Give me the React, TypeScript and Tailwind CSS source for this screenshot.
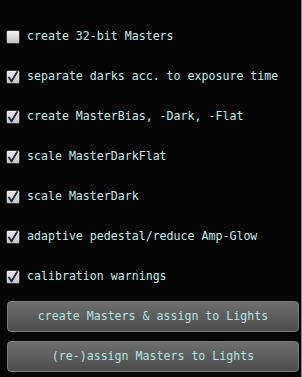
const options = [
  { label: 'create 32-bit Masters', checked: false },
  { label: 'separate darks acc. to exposure time', checked: true },
  { label: 'create MasterBias, -Dark, -Flat', checked: true },
  { label: 'scale MasterDarkFlat', checked: true },
  { label: 'scale MasterDark', checked: true },
  { label: 'adaptive pedestal/reduce Amp-Glow', checked: true },
  { label: 'calibration warnings', checked: true },
];

function CheckBox({ checked }: { checked: boolean }) {
  return (
    <div className="w-[14px] h-[14px] rounded-[2px] border border-[#3a3a3a] bg-gradient-to-b from-[#f0f0f0] to-[#c4c4c4] flex items-center justify-center shrink-0">
      {checked && (
        <svg width="12" height="12" viewBox="0 0 12 12">
          <path d="M2 6.5 L4.5 10.5 L10 1" fill="none" stroke="#1c2a44" strokeWidth="1.8" strokeLinecap="round" strokeLinejoin="round" />
        </svg>
      )}
    </div>
  );
}

function Button({ children }: { children: React.ReactNode }) {
  return (
    <button className="h-[31px] w-full rounded-[4px] border border-[#7a7a7a] bg-gradient-to-b from-[#6e6e6e] to-[#4c4c4c] text-[#b4e4e4] text-[11.6px]">
      {children}
    </button>
  );
}

export default function App() {
  return (
    <div
      className="w-[302px] h-[377px] bg-[#050505] border-r border-[#8a8a8a] flex flex-col pt-[17px] overflow-hidden"
      style={{ fontFamily: '"DejaVu Sans Mono", monospace' }}
    >
      {options.map((o) => (
        <div key={o.label} className="h-[40px] flex items-center pl-[6px] gap-[7px]">
          <CheckBox checked={o.checked} />
          <span className="text-[11.6px] text-[#c4ecec] whitespace-nowrap">{o.label}</span>
        </div>
      ))}
      <div className="flex flex-col gap-[9px] mt-[4px] pl-[7px] pr-[2px]">
        <Button>create Masters &amp; assign to Lights</Button>
        <Button>(re-)assign Masters to Lights</Button>
      </div>
    </div>
  );
}
